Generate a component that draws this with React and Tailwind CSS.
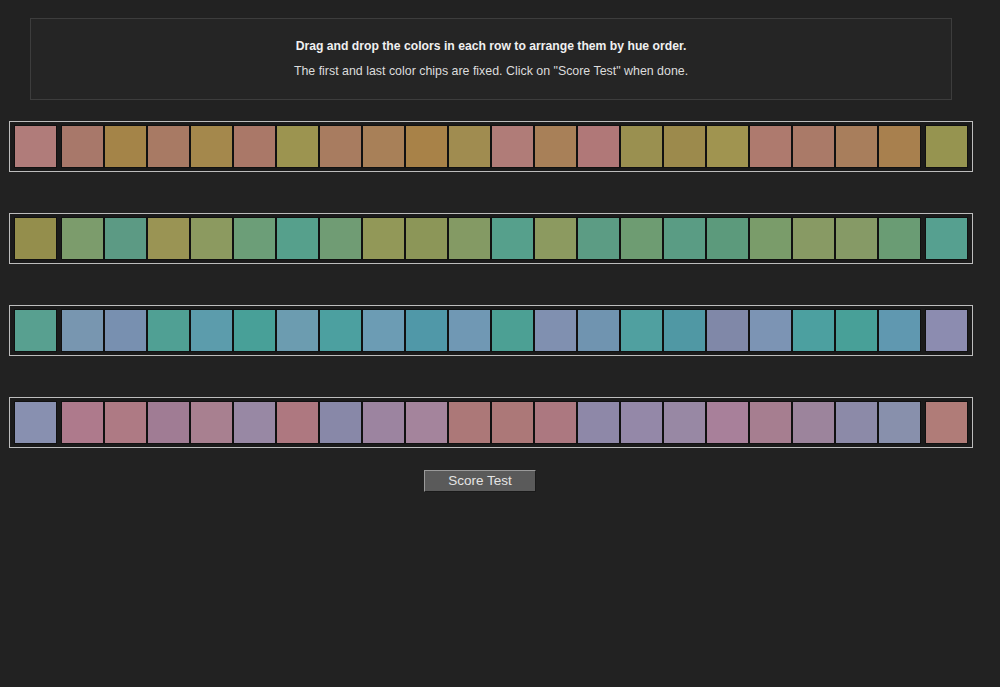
import React from 'react';

const rows = [
  {
    first: '#b07c7a',
    last: '#969450',
    chips: ['#a8786a', '#a48448', '#a87a64', '#a4884c', '#aa7868', '#9c9450', '#a87c60', '#a88058', '#a88248', '#a08c50',
            '#b07c78', '#a88058', '#b07878', '#9a9050', '#9c8a4c', '#a09450', '#ae7a6e', '#aa7a68', '#a87e5c', '#a8804e'],
  },
  {
    first: '#948e4c',
    last: '#56a090',
    chips: ['#7c9c6c', '#5c9a84', '#9a9454', '#8c9a60', '#6c9e78', '#56a08c', '#709c74', '#929858', '#8c9658', '#849a64',
            '#56a08c', '#8c9a60', '#5c9c84', '#6e9c72', '#5a9c84', '#5c9a7c', '#7a9c6a', '#889a64', '#869a66', '#6a9c74'],
  },
  {
    first: '#58a090',
    last: '#8c8cb0',
    chips: ['#7896b0', '#7890b0', '#50a094', '#5c9cac', '#48a098', '#6c9cb0', '#4ca0a0', '#6c9cb4', '#5098a8', '#7098b4',
            '#4ca094', '#8090b0', '#7094b0', '#50a0a0', '#5098a4', '#8088a8', '#7c94b4', '#4ca0a0', '#48a098', '#6098b0'],
  },
  {
    first: '#8890b0',
    last: '#b07c78',
    chips: ['#ae7a8c', '#ae7a84', '#a07c94', '#a88090', '#9888a4', '#ae7880', '#8888a8', '#9c84a0', '#a4849c', '#ac7878',
            '#ac7878', '#ac7880', '#8e88a8', '#9488a8', '#9888a4', '#a8809a', '#a67e90', '#9c849c', '#8c8aa8', '#8890ac'],
  },
];

function Chip({ color }) {
  return (
    <div className="w-[43px] h-[43px] flex-shrink-0 border border-[#111]"
         style={{ background: color }} />
  );
}

function ChipRow({ row, first }) {
  return (
    <div className={`ml-[9px] w-[964px] border border-[#bdbdbd] bg-[#1b1b1b] px-[4px] py-[3px] flex gap-[4px] ${first ? 'mt-[21px]' : 'mt-[41px]'}`}>
      <Chip color={row.first} />
      <div className="flex">
        {row.chips.map((c, i) => <Chip key={i} color={c} />)}
      </div>
      <Chip color={row.last} />
    </div>
  );
}

export default function App() {
  return (
    <div className="min-h-screen bg-[#222222] pt-[18px]" style={{ fontFamily: '"Liberation Sans", Arial, sans-serif' }}>
      {/* instructions */}
      <div className="ml-[30px] w-[922px] border border-[#3d3d3d] bg-[#252525] pt-[18px] pb-[19px] flex flex-col items-center gap-[7px]">
        <div className="text-[12.2px] leading-[18px] font-bold text-[#f0f0f0]">
          Drag and drop the colors in each row to arrange them by hue order.
        </div>
        <div className="text-[12.4px] leading-[18px] text-[#dcdcdc]">
          The first and last color chips are fixed. Click on "Score Test" when done.
        </div>
      </div>

      {rows.map((r, i) => <ChipRow key={i} row={r} first={i === 0} />)}

      <button className="ml-[424px] mt-[22px] w-[112px] h-[22px] flex items-center justify-center bg-[#5a5a5a] border border-t-[#9a9a9a] border-l-[#9a9a9a] border-b-[#1a1a1a] border-r-[#1a1a1a] text-[13.5px] text-[#e4e4e4]">
        Score Test
      </button>
    </div>
  );
}
